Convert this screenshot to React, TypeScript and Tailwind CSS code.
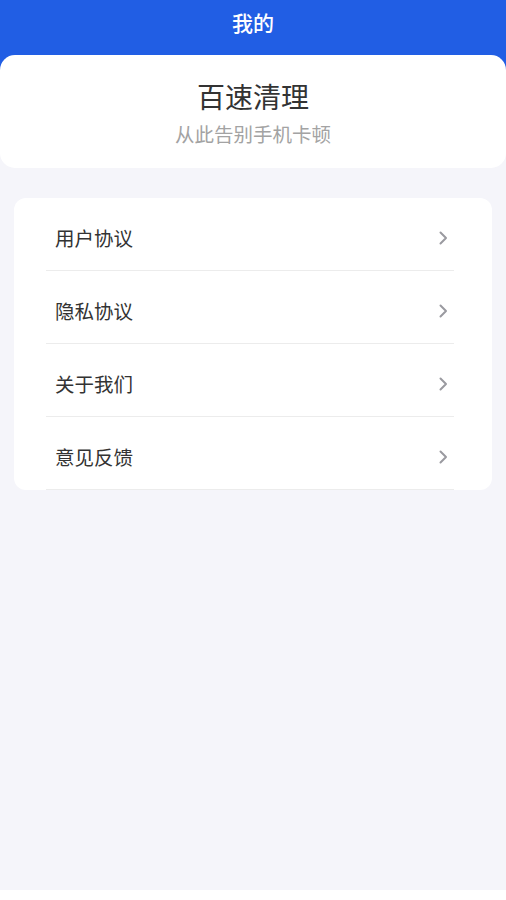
const MENU = ["用户协议", "隐私协议", "关于我们", "意见反馈"]

function Chevron() {
  return (
    <svg width="11" height="14" viewBox="0 0 11 14" fill="none" className="text-[#9a9aa0]">
      <path d="M2.5 1.5 L8 7 L2.5 12.5" stroke="currentColor" strokeWidth="2" strokeLinecap="round" strokeLinejoin="round" />
    </svg>
  )
}

export default function App() {
  return (
    <div
      className="flex h-[900px] w-[506px] flex-col bg-white"
      style={{ fontFamily: '"Noto Sans CJK SC", "Noto Sans", sans-serif' }}
    >
      <div className="flex h-[890px] flex-col bg-[#f5f5fa]">
        {/* header */}
        <div className="bg-[linear-gradient(#215ee4_0_80px,#f5f5fa_80px)]">
          <div className="flex h-[55px] items-start justify-center pt-[7px] text-[21px] font-medium leading-[30px] text-white">
            我的
          </div>
          <div className="flex h-[113px] flex-col items-center rounded-[15px] bg-white pt-[21px]">
            <div className="text-[28px] leading-[40px] text-[#333333]">百速清理</div>
            <div className="mt-[4px] text-[19.5px] leading-[28px] text-[#a3a3a3]">从此告别手机卡顿</div>
          </div>
        </div>
        <div className="pt-[30px]">
          <div className="mx-[14px] h-[292px] rounded-[12px] bg-white">
            {MENU.map(item => (
              <div
                key={item}
                className="ml-[32px] mr-[38px] flex h-[73px] items-center justify-between border-b border-[#ececec] pl-[9px] pr-[5px] pt-[8px]"
              >
                <span className="text-[19.5px] leading-[28px] text-[#333333]">{item}</span>
                <Chevron />
              </div>
            ))}
          </div>
        </div>
      </div>
    </div>
  )
}
